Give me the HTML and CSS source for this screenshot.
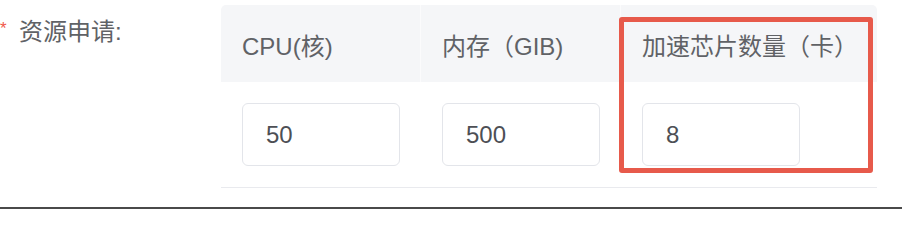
FILE: index.html
```html
<!DOCTYPE html>
<html lang="zh-CN">
<head>
<meta charset="utf-8">
<title>资源申请</title>
<link rel="stylesheet" href="styles.css">
</head>
<body>
<div class="page">
  <div class="form-row">
    <div class="label"><span class="req">*</span>资源申请:</div>
    <div class="res-table">
      <div class="thead">
        <div class="th col-a">CPU(核)</div>
        <div class="th col-b">内存（GIB)</div>
        <div class="th col-c">加速芯片数量（卡）</div>
      </div>
      <div class="tbody">
        <div class="td col-a"><input class="num" type="text" value="50"></div>
        <div class="td col-b"><input class="num" type="text" value="500"></div>
        <div class="td col-c"><input class="num" type="text" value="8"></div>
      </div>
      <div class="highlight"></div>
    </div>
  </div>
  <div class="bottom-rule"></div>
</div>
</body>
</html>
```

FILE: styles.css
```css
html, body {
  margin: 0;
  padding: 0;
  background: #ffffff;
}

body {
  font-family: "Liberation Sans", "Noto Sans CJK SC", sans-serif;
  font-size: 24px;
  color: #606266;
  width: 902px;
  height: 210px;
  overflow: hidden;
}

.page {
  display: flex;
  flex-direction: column;
}

.form-row {
  display: flex;
  padding-top: 5px;
}

.label {
  width: 221px;
  flex: none;
  box-sizing: border-box;
  padding-top: 11px;
  line-height: 32px;
  color: #606266;
  white-space: nowrap;
}

.req {
  color: #f0584a;
  font-size: 17px;
  display: inline-block;
  width: 19px;
  vertical-align: top;
  line-height: 26px;
}

.res-table {
  position: relative;
  width: 656px;
  flex: none;
}

.thead {
  display: flex;
  height: 77px;
  background: #f5f6f8;
  border-radius: 5px 5px 0 0;
}

.tbody {
  display: flex;
  border-bottom: 1px solid #e9eaee;
}

.col-a { width: 200px; }
.col-b { width: 200px; }
.col-c { flex: 1; }

.th {
  box-sizing: border-box;
  display: flex;
  align-items: center;
  padding-left: 21px;
  padding-top: 1px;
  color: #606266;
  white-space: nowrap;
  border-right: 1px solid #fbfbfc;
}

.th.col-c {
  border-right: none;
}

.td {
  box-sizing: border-box;
  padding: 21px 0 21px 21px;
}

.num {
  display: block;
  box-sizing: border-box;
  width: 158px;
  height: 63px;
  margin: 0;
  padding: 0 0 0 23px;
  border: 1px solid #e3e5ea;
  border-radius: 6px;
  background: #ffffff;
  font-family: "Liberation Sans", "Noto Sans CJK SC", sans-serif;
  font-size: 24px;
  color: #4d4f55;
  outline: none;
}

.highlight {
  position: absolute;
  left: 398px;
  top: 12px;
  width: 254px;
  height: 156px;
  box-sizing: border-box;
  border: 5px solid #e75a4b;
  border-radius: 3px;
  pointer-events: none;
}

.bottom-rule {
  margin-top: 19px;
  height: 2px;
  background: #4a4a4a;
}
```
